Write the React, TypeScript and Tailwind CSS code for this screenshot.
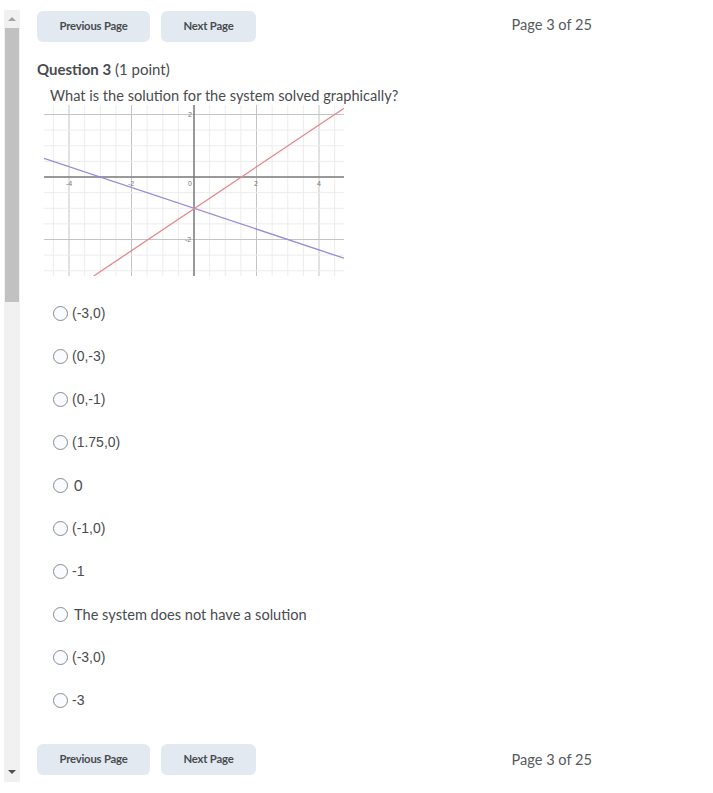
import React from 'react';

const options: { label: string; arial: boolean }[] = [
  { label: '(-3,0)', arial: true },
  { label: '(0,-3)', arial: true },
  { label: '(0,-1)', arial: true },
  { label: '(1.75,0)', arial: true },
  { label: '0', arial: false },
  { label: '(-1,0)', arial: true },
  { label: '-1', arial: true },
  { label: 'The system does not have a solution', arial: false },
  { label: '(-3,0)', arial: true },
  { label: '-3', arial: true },
];

const NavBar = ({ top }: { top?: boolean }) => (
  <div className="flex items-center w-[555px] h-[31px]">
    <button className="w-[113px] h-[31px] rounded-md bg-[#e3e9f1] text-[11.3px] font-bold text-[#494c4e] tracking-[-0.2px]">
      Previous Page
    </button>
    <button className="ml-[11px] w-[95px] h-[31px] rounded-md bg-[#e3e9f1] text-[11.3px] font-bold text-[#494c4e] tracking-[-0.2px]">
      Next Page
    </button>
    <span className={top ? 'ml-auto mb-[3px] text-[14.6px] text-[#565a5c]' : 'ml-auto text-[14.6px] text-[#565a5c]'}>
      Page 3 of 25
    </span>
  </div>
);

const Graph = () => {
  const ox = 150;
  const oy = 72;
  const u = 31.25;
  const verticals = [];
  for (let k = -9; k <= 9; k++) {
    const x = ox + k * (u / 2);
    const major = k % 4 === 0 && k !== 0;
    verticals.push(
      <line key={'v' + k} x1={x} y1={0} x2={x} y2={171} stroke={major ? '#c4c4c4' : '#ececec'} strokeWidth={1} />
    );
  }
  const horizontals = [];
  for (let k = -4; k <= 6; k++) {
    const y = oy + k * (u / 2);
    const major = k % 4 === 0 && k !== 0;
    horizontals.push(
      <line key={'h' + k} x1={0} y1={y} x2={300} y2={y} stroke={major ? '#c4c4c4' : '#ececec'} strokeWidth={1} />
    );
  }
  return (
    <svg width="300" height="171" viewBox="0 0 300 171" className="block">
      {verticals}
      {horizontals}
      <line x1={0} y1={oy} x2={300} y2={oy} stroke="#7a7a7a" strokeWidth={1.5} />
      <line x1={ox} y1={0} x2={ox} y2={171} stroke="#7a7a7a" strokeWidth={1.5} />
      <g fontSize="7" fill="#777" fontFamily="Liberation Sans, sans-serif">
        <text x={22} y={81}>-4</text>
        <text x={84} y={81}>-2</text>
        <text x={144} y={81}>0</text>
        <text x={210} y={81}>2</text>
        <text x={273} y={81}>4</text>
        <text x={144} y={12}>2</text>
        <text x={141} y={137}>-2</text>
      </g>
      <line x1={0} y1={53.25} x2={300} y2={153.25} stroke="#9788d8" strokeWidth={1.3} />
      <line x1={49.7} y1={171} x2={300} y2={3.25} stroke="#e3898b" strokeWidth={1.3} />
    </svg>
  );
};

const Scrollbar = () => (
  <div className="pl-[4px] pt-[10px] pb-[11px] h-full">
    <div className="w-[16px] h-full bg-[#f1f1f1] flex flex-col items-center">
      <div className="h-[18px] flex items-center justify-center">
        <div className="w-0 h-0 border-l-[4px] border-r-[4px] border-b-[4px] border-l-transparent border-r-transparent border-b-[#a3a3a3]" />
      </div>
      <div className="w-[14px] h-[274px] bg-[#c1c1c1]" />
      <div className="flex-1" />
      <div className="h-[20px] flex items-center justify-center">
        <div className="w-0 h-0 border-l-[4px] border-r-[4px] border-t-[4px] border-l-transparent border-r-transparent border-t-[#505050]" />
      </div>
    </div>
  </div>
);

export default function App() {
  return (
    <div className="w-[713px] h-[793px] bg-white flex" style={{ fontFamily: 'Lato, "Liberation Sans", sans-serif' }}>
      <Scrollbar />
      <div className="ml-[17px] pt-[11px] flex flex-col">
        <NavBar top />
        <div className="mt-[16px] text-[15px] text-[#494c4e] leading-[22px]">
          <span className="font-bold">Question 3</span> (1 point)
        </div>
        <div className="ml-[7px] flex flex-col">
          <div className="pl-[6px] mt-[5px] text-[14.6px] text-[#494c4e] leading-[22px]">
            What is the solution for the system solved graphically?
          </div>
          <div className="-mt-[2px]">
            <Graph />
          </div>
          <div className="mt-[16px] flex flex-col pl-[9px]">
            {options.map((o, i) => (
              <div key={i} className="h-[43px] flex items-center">
                <div className="w-[15px] h-[15px] rounded-full border border-[#878b8e] bg-[#f9fbff]" />
                <span
                  className={
                    o.arial
                      ? 'ml-[4px] text-[14px] text-[#494c4e]'
                      : 'ml-[6px] text-[14.6px] text-[#494c4e]'
                  }
                  style={o.arial ? { fontFamily: '"Liberation Sans", Arial, sans-serif' } : undefined}
                >
                  {o.label}
                </span>
              </div>
            ))}
          </div>
        </div>
        <div className="mt-[22px]">
          <NavBar />
        </div>
      </div>
    </div>
  );
}
